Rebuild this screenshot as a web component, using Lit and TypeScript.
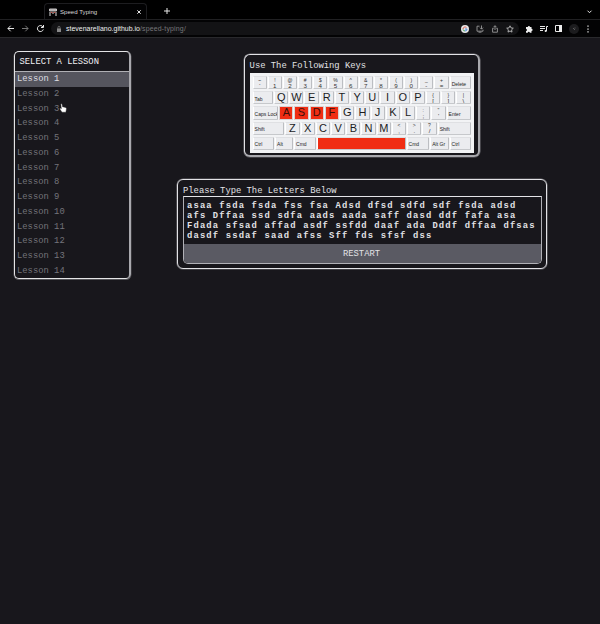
import { LitElement, html, css } from "lit";
import { customElement, property } from "lit/decorators.js";
import { classMap } from "lit/directives/class-map.js";

@customElement("browser-chrome")
class BrowserChrome extends LitElement {
  static styles = css`
    :host { display: block; height: 38px; background: #000; font-family: "Liberation Sans", Arial, sans-serif; color: #d8d8da; }
    svg { display: block; fill: none; stroke: #e8e8e8; stroke-width: 1; overflow: visible; }
    .tabs { height: 19px; display: flex; align-items: flex-end; padding-left: 44px; box-sizing: border-box; }
    .tab { width: 103px; height: 16px; box-sizing: border-box; border: 1px solid #1d1d20; border-bottom: 0; border-radius: 4px 4px 0 0; background: #020203; display: flex; align-items: center; padding: 0 5px 0 4px; }
    .title { font-size: 6.1px; margin-left: 3px; flex: 1; white-space: nowrap; }
    .plus { margin: 0 0 5px 17px; }
    .down { margin: 0 8px 5px auto; }
    .bar { height: 19px; box-sizing: border-box; border-top: 1px solid #202022; border-bottom: 1px solid #29292c; background: #030304; display: flex; align-items: center; padding-left: 7px; }
    .nav { display: flex; gap: 8px; }
    .dim { stroke: #777; }
    .url { margin-left: 7px; width: 468px; height: 13px; border-radius: 7px; background: #131315; display: flex; align-items: center; box-sizing: border-box; padding: 0 5px 0 6px; }
    .address { font-size: 6.95px; margin-left: 5px; flex: 1; white-space: nowrap; color: #777779; }
    .host { color: #f0f0f0; letter-spacing: 0.03px; }
    .path { letter-spacing: 0.17px; }
    .tools { display: flex; gap: 7px; }
    .ext { display: flex; gap: 7px; margin-left: 6px; align-items: center; }
  `;
  render() {
    return html`
      <div class="tabs">
        <div class="tab">
          <svg width="8" height="8"><path d="M.5 1h7v2h-7z" fill="#aaa" stroke="#c9c5c6"/><path d="M1 4v4M4 4v2M7 4v4" stroke="#ddd"/><path d="M1.8 4.5h1.5M4.8 4.5h1.6" stroke="#c45349"/></svg>
          <span class="title">Speed Typing</span>
          <svg width="4" height="4"><path d="M.3.3l3.4 3.4M3.7.3L.3 3.7"/></svg>
        </div>
        <svg class="plus" width="6" height="6"><path d="M3 0v6M0 3h6"/></svg>
        <svg class="down" width="5" height="4"><path d="M.5.7L2.5 2.7 4.5.7"/></svg>
      </div>
      <div class="bar">
        <div class="nav">
          <svg width="7" height="7"><path d="M7 3.5H1M3.7.7L.9 3.5l2.8 2.8"/></svg>
          <svg class="dim" width="7" height="7"><path d="M0 3.5h6M3.3.7l2.8 2.8-2.8 2.8"/></svg>
          <svg width="7" height="7"><path d="M6 2A3 3 0 1 0 6.3 4.4M6.5 0v2.5H4"/></svg>
        </div>
        <div class="url">
          <svg width="4" height="6"><path d="M1 2.5V1.3a1 1 0 0 1 2 0v1.2" stroke="#888" stroke-width=".7"/><path d="M0 2.4h4V6H0z" fill="#888" stroke="none"/></svg>
          <span class="address"><span class="host">stevenarellano.github.io</span><span class="path">/speed-typing/</span></span>
          <div class="tools">
            <svg width="8" height="8"><circle cx="4" cy="4" r="4" fill="#e5e5e5" stroke="none"/><path d="M2 4a2 2 0 0 1 3.5-1.3" stroke="#d85a4d"/><path d="M4 4h2a2 2 0 0 1-2 2" stroke="#538de0"/><path d="M2 4.3A2 2 0 0 0 4 6" stroke="#4ca45d"/></svg>
            <svg width="8" height="8"><path d="M3.5 1.2H1v5h6V4.7M2.5 7.2h3M5.5.5V4M4 2.7L5.5 4.2 7 2.7" stroke="#999" stroke-width=".9"/></svg>
            <svg width="8" height="8"><path d="M2.8 3.2H1.6v4h4.8v-4H5.2M4 5V.8M2.7 2L4 .7 5.3 2" stroke="#999" stroke-width=".9"/></svg>
            <svg width="8" height="8"><path d="M4 .8l1 2.1 2.3.3-1.7 1.6.4 2.3L4 6 2 7.1l.4-2.3L.7 3.2 3 2.9z" stroke="#bbb" stroke-width=".9"/></svg>
          </div>
        </div>
        <div class="ext">
          <svg width="8" height="8"><path d="M1 2h1.8a1.1 1.1 0 1 1 2.2 0H6.5v1.8a1.1 1.1 0 1 1 0 2.2v1.8H4.8a1 1 0 0 0-2 0H1V6a1 1 0 0 0 0-2z" fill="#eee" stroke="none"/></svg>
          <svg width="8" height="8"><path d="M0 1.5h5M0 3.5h5M0 5.5h3M6.5 6V1.5H8"/><circle cx="5.7" cy="6" r="1.1" fill="#eee" stroke="none"/></svg>
          <svg width="7" height="7"><path d="M.5.5h6v6h-6z"/><path d="M4 0h3v7H4z" fill="#eee" stroke="none"/></svg>
          <svg width="10" height="10"><circle cx="5" cy="5" r="5" fill="#1c1c1e" stroke="none"/><path d="M4 4l2 2M5.5 4h1" stroke="#777" stroke-width=".7"/></svg>
          <svg width="4" height="8"><path d="M2 .5v1.3M2 3.4v1.3M2 6.3v1.3" stroke-width="1.3"/></svg>
        </div>
      </div>`;
  }
}

type Key = { t: string; s?: string; w?: number; k?: "word" | "sym" | "space"; hot?: boolean };
const sym = (pairs: string[]): Key[] => pairs.map((p) => ({ t: p[1] ?? "", s: p[0], k: "sym" }));
const letters = (s: string, hot = ""): Key[] => [...s].map((t) => ({ t, hot: hot.includes(t) }));
const word = (t: string, w: number): Key => ({ t, w, k: "word" });
const ROWS: Key[][] = [
  [...sym(["~`", "!1", "@2", "#3", "$4", "%5", "^6", "&7", "*8", "(9", ")0", "_-", "+="]), word("Delete", 22)],
  [word("Tab", 21.5), ...letters("QWERTYUIOP"), ...sym(["{[", "}]", "|\\"])],
  [word("Caps Lock", 26.6), ...letters("ASDFGHJKL", "ASDF"), ...sym([":;", "\"'"]), word("Enter", 25)],
  [word("Shift", 32.7), ...letters("ZXCVBNM"), ...sym(["<,", ">.", "?/"]), word("Shift", 34)],
  [word("Ctrl", 22.5), word("Alt", 19), word("Cmd", 22.5), { t: "", w: 90, k: "space" }, word("Cmd", 23.7), word("Alt Gr", 19.3), word("Ctrl", 22)],
];

@customElement("key-board")
class KeyBoard extends LitElement {
  static styles = css`
    :host { display: flex; flex-direction: column; box-sizing: border-box; width: 224px; height: 80px; padding: 2px 2px 2px 3px; background: #f2f3f5; font-family: "Liberation Sans", Arial, sans-serif; color: #1c1c1e; }
    .row { display: flex; height: 15.2px; }
    .cell { flex: 1 1 15.25px; min-width: 0; padding: 1px 1px 1px 0; box-sizing: border-box; }
    .fixed { flex: 0 0 auto; }
    .key { height: 100%; box-sizing: border-box; border-right: 1px solid #bcbec2; border-bottom: 1px solid #c6c8cb; border-top: 1px solid #dfe0e3; border-left: 1px solid #fff; border-radius: 1px; background: #ebecef; display: flex; flex-direction: column; align-items: center; justify-content: center; font-size: 11px; line-height: 11px; overflow: hidden; }
    .word { font-size: 5px; line-height: 6px; align-items: flex-start; padding: 2px 0 0 1px; white-space: nowrap; color: #222; }
    .sym { font-size: 6.2px; line-height: 5px; color: #333; }
    .upper { font-size: 5px; }
    .hot { background: #f02d13; border: 1px solid #d8d2d3; color: #3a0f0a; }
    .space { background: #f02d13; }
  `;
  render() {
    return html`${ROWS.map((row) => html`<div class="row">${row.map((k) => html`
      <div class=${classMap({ cell: true, fixed: !!k.w })} style=${k.w ? `width:${k.w}px` : ""}>
        <div class=${classMap({ key: true, word: k.k === "word", sym: k.k === "sym", space: k.k === "space", hot: !!k.hot })}>
          ${k.s ? html`<span class="upper">${k.s}</span>` : ""}<span>${k.t}</span>
        </div>
      </div>`)}</div>`)}`;
  }
}

@customElement("lesson-list")
class LessonList extends LitElement {
  @property({ type: Number }) active = 1;
  static styles = css`
    :host { display: block; box-sizing: border-box; width: 117px; height: 228px; border: solid; border-width: 1px 2px 1px 1px; border-color: #e4e4e6 #a9a9ae #e4e4e6 #e4e4e6; border-radius: 5px; overflow: hidden; box-shadow: 0 0.5px 0 0.5px rgba(225, 225, 230, 0.3); }
    .head { height: 20px; line-height: 21px; box-sizing: border-box; padding-left: 4.5px; color: #f0f0f2; border-bottom: 1px solid #b0b0b5; }
    .item { height: 14.77px; line-height: 15.5px; padding-left: 2px; color: #74747b; }
    .active { background: #55555e; color: #dedee2; }
  `;
  render() {
    return html`<div class="head">SELECT A LESSON</div>
      ${Array.from({ length: 14 }, (_, i) => html`<div class=${classMap({ item: true, active: i + 1 === this.active })}>Lesson ${i + 1}</div>`)}`;
  }
}

const LINES = [
  "asaa fsda fsda fss fsa Adsd dfsd sdfd sdf fsda adsd",
  "afs Dffaa ssd sdfa aads aada saff dasd ddf fafa asa",
  "Fdada sfsad affad asdf ssfdd daaf ada Dddf dffaa dfsas",
  "dasdf ssdaf saad afss Sff fds sfsf dss",
];

@customElement("app-root")
class AppRoot extends LitElement {
  static styles = css`
    :host { display: block; height: 624px; background: #18171c; overflow: hidden; position: relative; font: 8.83px "Liberation Mono", monospace; color: #e2e2e6; }
    .page { display: flex; padding: 13px 0 0 14px; align-items: flex-start; }
    .main { display: flex; flex-direction: column; align-items: center; margin: 3px 0 0 46px; width: 370px; }
    .panel { box-sizing: border-box; border: 1px solid #e2e2e6; border-radius: 6px; box-shadow: 0 0 0 0.6px rgba(225, 225, 230, 0.4); }
    .keys { width: 236px; height: 103px; padding: 4px 5px 0 4.6px; border-right: 2px solid #a9a9ae; border-bottom: 2px solid #a9a9ae; }
    .label { height: 14px; line-height: 14px; white-space: nowrap; }
    .typing { width: 370px; height: 90px; margin-top: 22px; padding: 4px 5px; }
    .typing .label { height: 12px; }
    .box { height: 68px; width: 359px; box-sizing: border-box; border: 1px solid #b0b0b6; border-top-color: #e4e4e8; border-radius: 0 0 5px 5px; overflow: hidden; display: flex; flex-direction: column; }
    .text { height: 47px; box-sizing: border-box; padding: 4px 0 0 3px; font-weight: bold; line-height: 10.1px; letter-spacing: 1.16px; flex: none; white-space: nowrap; }
    .restart { flex: 1; background: #5a5a63; text-align: center; line-height: 20px; padding-right: 2px; }
    .pointer { position: absolute; left: 59px; top: 103px; }
  `;
  render() {
    return html`
      <browser-chrome></browser-chrome>
      <div class="page">
        <lesson-list></lesson-list>
        <div class="main">
          <div class="panel keys"><div class="label">Use The Following Keys</div><key-board></key-board></div>
          <div class="panel typing">
            <div class="label">Please Type The Letters Below</div>
            <div class="box">
              <div class="text">${LINES.map((l) => html`<div>${l}</div>`)}</div>
              <div class="restart">RESTART</div>
            </div>
          </div>
        </div>
      </div>
      <svg class="pointer" width="8" height="11"><path d="M1.8 1c.7-.4 1.3 0 1.4.8l.3 2 3 .6c.8.3 1 .8.9 1.6l-.5 3.2H3L.8 6c-.2-.7.4-1 1-.7l.6.4z" fill="#fff" stroke="#222" stroke-width=".4"/></svg>`;
  }
}
